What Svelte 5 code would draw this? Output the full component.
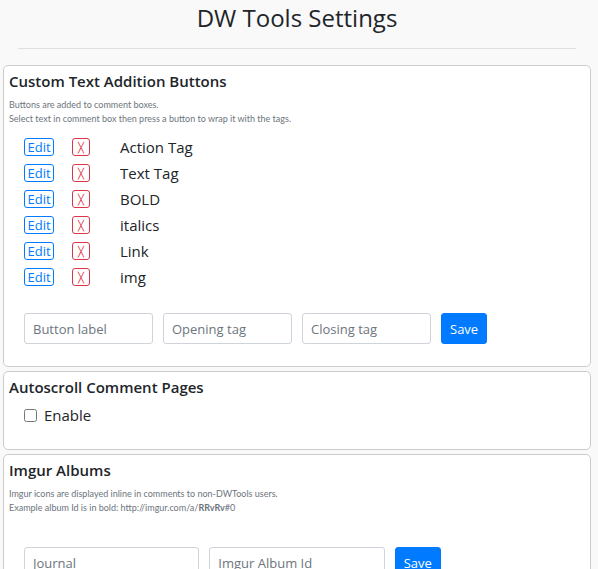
<script lang="ts">
	let tags = $state(['Action Tag', 'Text Tag', 'BOLD', 'italics', 'Link', 'img']);
	let label = $state('');
	let opening = $state('');
	let closing = $state('');
	let journal = $state('');
	let album = $state('');
	let autoscroll = $state(false);

	function edit(tag: string) {
		label = tag;
	}

	function remove(tag: string) {
		tags = tags.filter((t) => t !== tag);
	}

	function saveTag(event: SubmitEvent) {
		event.preventDefault();
		if (label && !tags.includes(label)) tags.push(label);
		label = opening = closing = '';
	}
</script>

<header>
	<h1>DW Tools Settings</h1>
	<hr />
</header>

<main>
	<section>
		<h2>Custom Text Addition Buttons</h2>
		<p class="help">
			Buttons are added to comment boxes.<br />
			Select text in comment box then press a button to wrap it with the tags.
		</p>
		<table>
			<tbody>
				{#each tags as tag (tag)}
					<tr>
						<td class="action">
							<button type="button" class="small edit" onclick={() => edit(tag)}>Edit</button>
						</td>
						<td class="action">
							<button
								type="button"
								class="small delete"
								aria-label="Delete {tag}"
								onclick={() => remove(tag)}>╳</button
							>
						</td>
						<td>{tag}</td>
					</tr>
				{/each}
			</tbody>
		</table>
		<form class="row" onsubmit={saveTag}>
			<div class="quarter">
				<input type="text" aria-label="Button label" placeholder="Button label" bind:value={label} />
			</div>
			<div class="quarter">
				<input type="text" aria-label="Opening tag" placeholder="Opening tag" bind:value={opening} />
			</div>
			<div class="quarter">
				<input type="text" aria-label="Closing tag" placeholder="Closing tag" bind:value={closing} />
			</div>
			<div>
				<button type="submit" class="save">Save</button>
			</div>
		</form>
	</section>

	<section>
		<h2>Autoscroll Comment Pages</h2>
		<div class="check">
			<input type="checkbox" id="autoscroll" bind:checked={autoscroll} />
			<label for="autoscroll">Enable</label>
		</div>
	</section>

	<section>
		<h2>Imgur Albums</h2>
		<p class="help">
			Imgur icons are displayed inline in comments to non-DWTools users.<br />
			Example album Id is in bold: http://imgur.com/a/<b>RRvRv</b>#0
		</p>
		<form class="row" onsubmit={(event) => event.preventDefault()}>
			<div class="third">
				<input type="text" aria-label="Journal" placeholder="Journal" bind:value={journal} />
			</div>
			<div class="third">
				<input type="text" aria-label="Imgur Album Id" placeholder="Imgur Album Id" bind:value={album} />
			</div>
			<div>
				<button type="submit" class="save">Save</button>
			</div>
		</form>
	</section>
</main>

<style>
	:global(body) {
		background: #f9f9f9;
		color: #212529;
		font-family: 'Segoe UI', 'Open Sans', 'Noto Sans', sans-serif;
		font-size: 15px;
		line-height: 24px;
	}

	header {
		padding: 3px 22px 0 18px;
	}

	h1 {
		margin: 0;
		font-size: 24px;
		font-weight: 500;
		line-height: 30px;
		text-align: center;
	}

	hr {
		margin: 15px 0 16px;
		border: 0;
		border-top: 1px solid #dfdfdf;
	}

	main {
		display: flex;
		flex-direction: column;
		gap: 4px;
		padding: 0 7px 4px 3px;
	}

	section {
		padding: 5px 5px 22px;
		background: #fff;
		border: 1px solid #ccc;
		border-radius: 5px;
	}

	h2 {
		margin: 0 0 7px;
		font-size: 15px;
		font-weight: 600;
		line-height: 20px;
	}

	.help {
		margin: 0;
		color: #6c757d;
		font-family: 'Segoe UI', Lato, sans-serif;
		font-size: 9px;
		line-height: 14px;
	}

	table {
		margin: 8px 0 0 15px;
		border-collapse: collapse;
	}

	td {
		height: 26px;
		padding: 0;
	}

	.action {
		width: 48px;
	}

	button {
		display: block;
		box-sizing: border-box;
		border: 1px solid;
		border-radius: 3px;
		font-family: inherit;
		cursor: pointer;
	}

	.small {
		height: 18px;
		padding: 0;
		background: transparent;
		font-size: 13px;
		line-height: 16px;
	}

	.edit {
		width: 30px;
		color: #007bff;
	}

	.delete {
		width: 18px;
		color: #dc3545;
		font-size: 10px;
	}

	.row {
		display: flex;
		margin: 23px 10px 0;
	}

	.row > div {
		box-sizing: border-box;
		padding: 0 5px;
	}

	.quarter {
		flex: 0 0 25%;
	}

	.third {
		flex: 0 0 33.3333%;
	}

	.help + .row {
		margin-top: 32px;
	}

	.row input,
	.save {
		box-sizing: border-box;
		height: 31px;
		padding: 0 8px;
		font-family: inherit;
		font-size: 13px;
	}

	.row input {
		display: block;
		width: 100%;
		background: #fff;
		border: 1px solid #ced4da;
		border-radius: 3px;
		color: #495057;
	}

	.row input::placeholder {
		color: #6c757d;
		opacity: 1;
	}

	.save {
		background: #007bff;
		border-color: #007bff;
		color: #fff;
	}

	.check {
		display: flex;
		align-items: center;
		gap: 7px;
		margin-left: 15px;
		line-height: 23px;
	}

	.check input {
		width: 13px;
		height: 13px;
		margin: 0;
	}
</style>
